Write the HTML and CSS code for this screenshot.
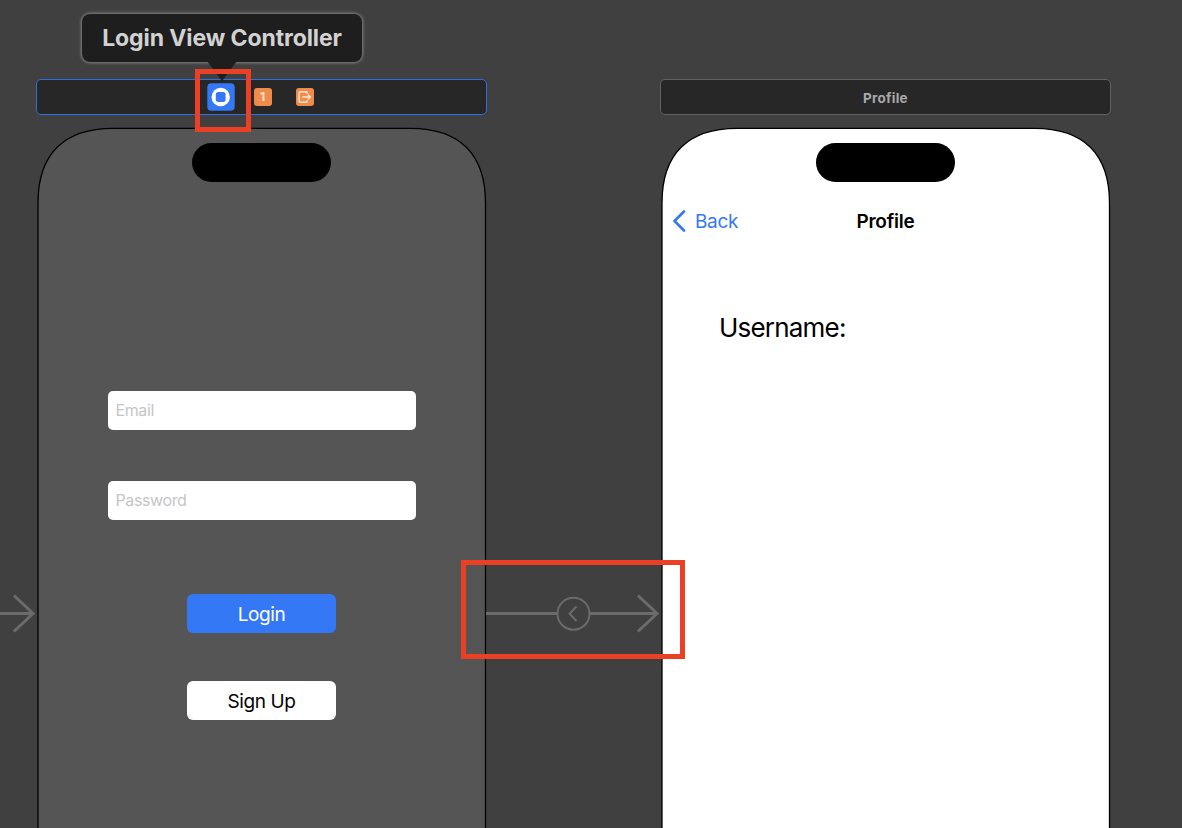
FILE: index.html
```html
<!DOCTYPE html>
<html lang="en">
<head>
<meta charset="utf-8">
<title>Storyboard</title>
<link rel="stylesheet" href="styles.css">
</head>
<body>
<main class="canvas">
  <svg class="segue segue-entry" width="38" height="44" viewBox="0 0 38 44"><path d="M0 22.500H33M14 4.500L33 22.500L14 40.500"/></svg>

  <section class="scene scene-login">
    <header class="dock dock-selected">
      <svg class="dock-icon dock-controller" width="28" height="28" viewBox="0 0 28 28"><rect x=".3" y=".3" width="27.4" height="27.4" rx="4" fill="#3478f6"/><circle cx="13.700" cy="14" r="9.200" fill="#fff"/><rect x="8.800" y="9.100" width="9.800" height="9.800" rx="2.500" fill="#3478f6"/></svg>
      <span class="dock-icon dock-responder">1</span>
      <svg class="dock-icon" width="18" height="18" viewBox="0 0 18 18"><rect width="18" height="18" rx="3" fill="#f08c4b"/><path d="M11.2 6V5Q11.200 3.700 9.900 3.700H4.500Q3.200 3.700 3.200 5V13Q3.200 14.300 4.500 14.300H9.900Q11.200 14.300 11.200 13V12M6.300 9H14.300M12 6.600L14.400 9L12 11.400" fill="none" stroke="#fbe3d3" stroke-width="1.500"/></svg>
    </header>
    <div class="phone">
      <svg class="phone-shape phone-dark" width="451" height="720" viewBox="0 0 451 720"><path d="M2 720V76C2 27 28 1.300 77 1.300H374.500C423.500 1.300 449.500 27 449.500 76V720"/></svg>
      <div class="island"></div>
      <form class="login-form">
        <input class="field" type="text" placeholder="Email">
        <input class="field field-password" type="text" placeholder="Password">
        <button class="button button-login" type="button">Login</button>
        <button class="button button-signup" type="button">Sign Up</button>
      </form>
    </div>
  </section>

  <section class="scene scene-profile">
    <header class="dock"><span class="dock-title">Profile</span></header>
    <div class="phone">
      <svg class="phone-shape phone-light" width="451" height="720" viewBox="0 0 451 720"><path d="M2 720V76C2 27 28 1.300 77 1.300H374.500C423.500 1.300 449.500 27 449.500 76V720"/></svg>
      <div class="island"></div>
      <nav class="navbar">
        <a class="back"><svg width="14" height="22" viewBox="0 0 14 22"><path d="M12 1.500L2.500 11L12 20.500" fill="none" stroke="#3478f6" stroke-width="2.600" stroke-linecap="round" stroke-linejoin="round"/></svg><span class="back-label">Back</span></a>
        <span class="nav-title">Profile</span>
      </nav>
      <p class="username">Username:</p>
    </div>
  </section>

  <svg class="segue segue-show" width="176" height="44" viewBox="0 0 176 44"><path d="M0 22.500H71M104 22.500H171M152 4.500L171 22.500L152 40.500"/><circle cx="87.500" cy="22.700" r="16" stroke-width="2"/><path d="M90.500 15.500L83.500 22.700L90.500 30" stroke-width="2"/></svg>

  <div class="tooltip">Login View Controller<svg class="tooltip-tail" width="30" height="21" viewBox="0 0 30 21"><path d="M0 0H30L15 20Z" fill="#1e1e1e"/></svg></div>
  <div class="mark mark-controller"></div>
  <div class="mark mark-segue"></div>
</main>
</body>
</html>
```
FILE: styles.css
```css
* { box-sizing: border-box; }
body { margin: 0; font-family: Inter, "Liberation Sans", sans-serif; }
.canvas { position: relative; width: 1182px; height: 828px; overflow: hidden; background: #404040; }

.scene { position: absolute; top: 79px; width: 451px; display: flex; flex-direction: column; gap: 12px; }
.scene-login { left: 36px; }
.scene-profile { left: 660px; }

.dock { height: 36px; display: flex; align-items: center; justify-content: center; background: #272727; border: 1.500px solid #626262; border-radius: 5px; }
.dock-selected { border-color: #2f6fe4; justify-content: flex-start; padding-left: 170px; }
.dock-icon { flex: none; }
.dock-controller { margin-right: 18.500px; }
.dock-responder { width: 18px; height: 18px; margin-right: 24px; border-radius: 3px; background: #f08c4b; color: #fbe3d3; font-size: 12px; font-weight: 700; line-height: 18px; text-align: center; }
.dock-title { color: #a9a9a9; font-size: 13.500px; font-weight: 700; letter-spacing: .25px; padding-top: 2px; }

.phone { position: relative; height: 720px; padding-top: 16px; display: flex; flex-direction: column; }
.phone-shape { position: absolute; top: 0; left: 0; stroke: #000; stroke-width: 1.300; }
.phone-dark { fill: #555; }
.phone-light { fill: #fff; }
.island { position: relative; flex: none; width: 139px; height: 39px; margin-left: 156px; border-radius: 20px; background: #000; }

.login-form { position: relative; display: flex; flex-direction: column; align-items: center; padding-top: 209px; }
.field { width: 308px; height: 39px; border: 0; border-radius: 5px; padding: 0 8px 1px; background: #fff; font: 400 16px Inter, sans-serif; letter-spacing: -.38px; }
.field::placeholder { color: #c5c5c7; opacity: 1; }
.field-password { margin-top: 51px; }
.button { width: 149px; height: 39px; border: 0; border-radius: 6px; padding: 0; font: 400 19px Inter, sans-serif; letter-spacing: -.4px; }
.button-login { margin-top: 74px; padding-top: 1px; background: #3478f6; color: #fff; }
.button-signup { margin-top: 48px; padding-top: 1px; background: #fff; color: #000; }

.navbar { position: relative; height: 46px; margin-top: 16px; display: grid; grid-template-columns: 1fr auto 1fr; align-items: center; font-size: 19px; letter-spacing: -.35px; }
.back { display: flex; align-items: center; gap: 9px; padding-left: 12px; color: #3478f6; }
.nav-title { font-weight: 600; letter-spacing: -.2px; }
.username { position: relative; margin: 67px 0 0 59px; font-size: 26px; line-height: 34px; letter-spacing: -.8px; }

.segue { position: absolute; fill: none; stroke: #6b6b6b; stroke-width: 3; }
.segue-entry { left: 0; top: 591px; }
.segue-show { left: 486px; top: 591px; }

.tooltip { position: absolute; left: 82px; top: 14px; width: 280px; height: 48px; border-radius: 8px; background: #1e1e1e; box-shadow: 0 0 3px 1px #858585; color: #d2d2d2; font-size: 23px; font-weight: 700; line-height: 48px; text-align: center; letter-spacing: -.1px; white-space: nowrap; }
.tooltip-tail { position: absolute; left: 125px; top: 47px; }
.mark { position: absolute; border: 5px solid #eb4025; }
.mark-controller { left: 195px; top: 69px; width: 56px; height: 63px; }
.mark-segue { left: 461px; top: 560px; width: 224px; height: 99px; }
```
